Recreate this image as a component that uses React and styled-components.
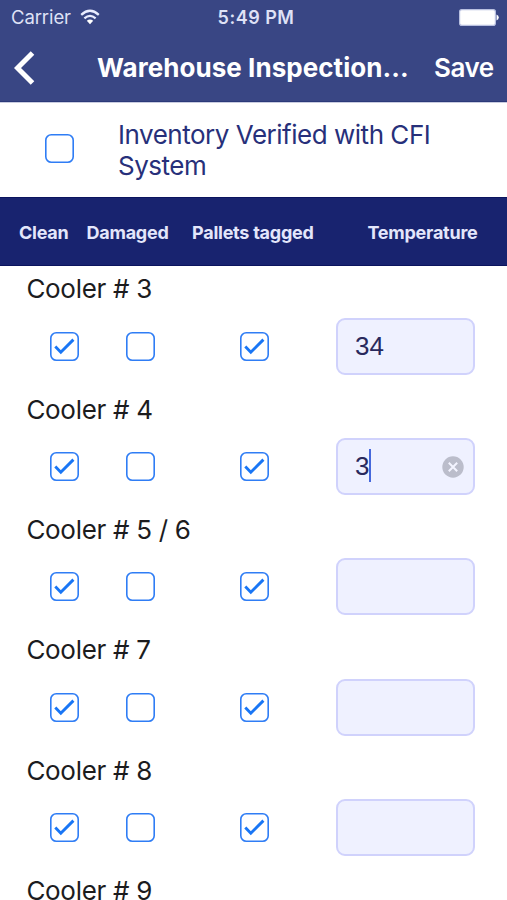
import React from 'react'

import styled, { createGlobalStyle } from 'styled-components'

const GlobalStyle = createGlobalStyle`
    *{
        box-sizing:border-box;
    }

    body{
        margin:0;
        background:#fff;
        font-family:Inter, "Liberation Sans", sans-serif;
    }
`;

const Screen = styled.div`
    width:507px;
    height:900px;
    overflow:hidden;
    background:#fff;
`;

const TopBar = styled.header`
    height:102px;
    background:#394684;
    border-bottom:1px solid #2b3979;
    color:#fff;
`;

const StatusBar = styled.div`
    display:grid;
    grid-template-columns:1fr auto 1fr;
    align-items:center;
    height:34px;
    padding:0 8px 0 11px;
    font-size:18.5px;
    line-height:24px;
    color:#dfe2f6;
`;

const Carrier = styled.div`
    display:flex;
    align-items:center;
    gap:9px;
    letter-spacing:-.1px;
`;

const Clock = styled.span`
    padding:1px 0 0 2px;
    font-size:18px;
    font-weight:600;
    letter-spacing:.5px;
`;

const BatteryIcon = styled.svg`
    justify-self:end;
`;

const NavBar = styled.nav`
    display:flex;
    align-items:center;
    height:67px;
    padding-left:14px;
`;

const Title = styled.h1`
    width:337px;
    margin:0 0 0 62px;
    font-size:26px;
    font-weight:700;
    letter-spacing:.05px;
    white-space:nowrap;
`;

const Save = styled.span`
    font-size:26px;
    font-weight:600;
    letter-spacing:-.5px;
`;

const Verified = styled.section`
    display:flex;
    height:95px;
    padding:16px 0 0 45px;
    border-top:1px solid #c9cce0;
    color:#27307a;

    p{
        margin:0 0 0 44px;
        width:340px;
        font-size:26px;
        line-height:31px;
        letter-spacing:-.48px;
    }
`;

const BoxWrap = styled.span`
    display:block;
    margin-top:${props => props.$top || 0}px;
    width:29px;
    height:29px;
    flex:none;

    svg{
        display:block;
    }
`;

const TableHead = styled.div`
    display:grid;
    grid-template-columns:67.5px 105.5px 175.5px 1fr;
    align-items:center;
    height:69px;
    padding:2px 0 0 19px;
    background:#18236f;
    border-top:1px solid #0b145e;
    border-bottom:1px solid #0b145e;
    color:#e3e6fb;
    font-size:18px;
    font-weight:700;
    letter-spacing:-.25px;
    white-space:nowrap;
`;

const Cooler = styled.section`
    height:120.3px;
    padding-top:7.4px;

    h2{
        margin:0 0 0 26.4px;
        font-size:26px;
        font-weight:400;
        line-height:32px;
        color:#1c1c1e;
        letter-spacing:-.3px;
    }
`;

const Fields = styled.div`
    display:grid;
    grid-template-columns:76px 114px 96.5px 139px;
    align-items:center;
    margin-top:12.3px;
    padding-left:49.5px;
`;

const TempField = styled.div`
    display:flex;
    align-items:center;
    height:57px;
    padding:0 9px 0 17px;
    border:2px solid #d0d2fc;
    border-radius:9px;
    background:#eff1ff;
    color:#29295d;
    font-family:"Liberation Sans", Arial, sans-serif;
    font-size:26px;

    svg{
        margin:1px 0 0 auto;
    }
`;

const Caret = styled.i`
    width:2px;
    height:33px;
    margin-top:-2px;
    background:#4668dc;
`;

const Checkbox = ({ checked, top }) => (
    <BoxWrap $top={top} role="checkbox" aria-checked={!!checked}>
        <svg width="29" height="29" viewBox="0 0 29 29" fill="none" stroke="#2f7df5">
            <rect x="0.8" y="0.8" width="27.4" height="27.4" rx="5.5" strokeWidth="1.6" />
            {checked && <path d="M5.3 14.6 L10.8 20.2 L23.4 7.6" stroke="#1976f5" strokeWidth="2.9" />}
        </svg>
    </BoxWrap>
)

const ClearIcon = () => (
    <svg width="22" height="22" viewBox="0 0 22 22">
        <circle cx="11" cy="11" r="10.7" fill="#bbbdcb" />
        <path d="M6.8 6.8 L15.2 15.2 M15.2 6.8 L6.8 15.2" stroke="#f3f4ff" strokeWidth="2" />
    </svg>
)

const coolers = [
    { name: 'Cooler # 3', temp: '34' },
    { name: 'Cooler # 4', temp: '3', editing: true },
    { name: 'Cooler # 5 / 6', temp: '' },
    { name: 'Cooler # 7', temp: '' },
    { name: 'Cooler # 8', temp: '' },
    { name: 'Cooler # 9', temp: '' },
]

const App = () => {
    return (
        <Screen>
            <GlobalStyle />
            <TopBar>
                <StatusBar>
                    <Carrier>
                        <span>Carrier</span>
                        <svg width="20" height="16" viewBox="0 0 20 16" fill="none" stroke="#e9ecff" strokeWidth="2.3">
                            <path d="M1.2 5.8 Q10 -2.2 18.8 5.8" />
                            <path d="M4.4 9.3 Q10 4.4 15.6 9.3" />
                            <path d="M6.8 11.7 Q10 9.2 13.2 11.7 L10 15.2 Z" fill="#fff" stroke="none" />
                        </svg>
                    </Carrier>
                    <Clock>5:49 PM</Clock>
                    <BatteryIcon width="40" height="17" viewBox="0 0 40 17">
                        <rect x="0.6" y="0.6" width="35.8" height="15.8" rx="2.2" fill="#fff" stroke="#b9c0e0" strokeWidth="1.2" />
                        <path d="M37.5 5.5 Q39.8 6.3 39.8 8.5 Q39.8 10.7 37.5 11.5 Z" fill="#fff" />
                    </BatteryIcon>
                </StatusBar>
                <NavBar>
                    <svg width="21" height="34" viewBox="0 0 21 34" fill="none" stroke="#fff" strokeWidth="5">
                        <path d="M18.5 2 L3.5 17 L18.5 32" />
                    </svg>
                    <Title>Warehouse Inspection...</Title>
                    <Save>Save</Save>
                </NavBar>
            </TopBar>
            <Verified>
                <Checkbox top={15} />
                <p>Inventory Verified with CFI System</p>
            </Verified>
            <TableHead>
                <span>Clean</span>
                <span>Damaged</span>
                <span>Pallets tagged</span>
                <span>Temperature</span>
            </TableHead>
            {coolers.map(({ name, temp, editing }) => (
                <Cooler key={name}>
                    <h2>{name}</h2>
                    <Fields>
                        <Checkbox checked />
                        <Checkbox />
                        <Checkbox checked />
                        <TempField>
                            {temp}
                            {editing && <Caret />}
                            {editing && <ClearIcon />}
                        </TempField>
                    </Fields>
                </Cooler>
            ))}
        </Screen>
    )
}

export default App;
